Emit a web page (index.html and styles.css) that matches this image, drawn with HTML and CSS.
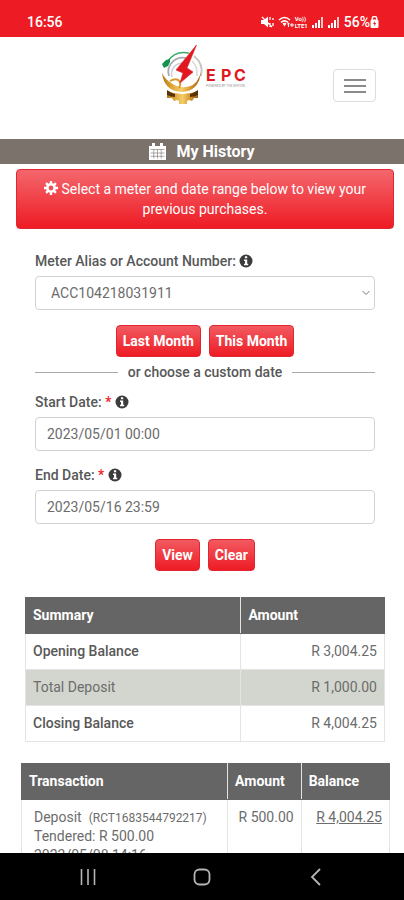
FILE: index.html
```html
<!DOCTYPE html>
<html lang="en">
<head>
<meta charset="utf-8">
<meta name="viewport" content="width=device-width, initial-scale=1">
<title>My History</title>
<link rel="stylesheet" href="styles.css">
</head>
<body>
<svg class="defs" aria-hidden="true">
  <symbol id="info" viewBox="0 0 14 14">
    <circle cx="7" cy="7" r="6.500" fill="#3c3c3c"/>
    <path d="M5.900 2.300h2.300v1.900H5.900zM5 5.400h3.200v4.400h1v1.500H5V9.800h1V6.900H5z" fill="#fff"/>
  </symbol>
  <symbol id="signal" viewBox="0 0 12 12">
    <path d="M0 9h2v3H0zM3 7h2v5H3zM6 4h2v8H6z" fill="#fff"/>
    <path d="M9 1h2v11H9z" fill="#fff" opacity=".75"/>
  </symbol>
</svg>

<div class="status-bar">
  <span class="clock">16:56</span>
  <div class="status-icons">
    <svg width="13" height="12" viewBox="0 0 13 12" aria-hidden="true"><path d="M0 4h3l4-3.500v11L3 8H0z" fill="#fff"/><path d="M1 1l10 10M9 1v3M9 7v4M12 2v2M12 7v3" stroke="#fff" stroke-width="1.300" fill="none"/></svg>
    <svg width="17" height="12" viewBox="0 0 17 12" aria-hidden="true"><path d="M1 4q5.500-5 11 0M3 6.300q3.500-3 7 0" stroke="#fff" stroke-width="1.600" fill="none"/><path d="M4.500 7.500q2-1.500 4 0l-2 3z" fill="#fff"/><path d="M10.500 11V7M9.200 8.300L10.500 7l1.300 1.300M14 7v4M12 9h4" stroke="#fff" fill="none"/></svg>
    <span class="volte"><span>Vo))</span><span>LTE1</span></span>
    <svg class="signal" width="12" height="12" aria-hidden="true"><use href="#signal"/></svg>
    <svg class="signal" width="12" height="12" aria-hidden="true"><use href="#signal"/></svg>
    <span class="battery">56%</span>
    <svg width="9" height="12" viewBox="0 0 9 12" aria-hidden="true"><path d="M2.200 4V2.500a2.300 2 0 0 1 4.600 0V4" stroke="#fff" stroke-width="1.300" fill="none"/><rect x=".5" y="3.500" width="8" height="8.500" rx="1.500" fill="#fff"/><path d="M5 4.800L3 8h1.500L4 10.800 6.300 7H4.700z" fill="#ed1c24"/></svg>
  </div>
</div>

<div class="page">
  <header class="site-header">
    <a class="brand" href="#" aria-label="EPC home">
      <svg width="86" height="62" viewBox="0 0 86 62" aria-hidden="true">
        <defs>
          <linearGradient id="gold" x1="0" x2="1">
            <stop offset="0" stop-color="#b3761a"/><stop offset=".25" stop-color="#dfa636"/>
            <stop offset=".5" stop-color="#f3cf6a"/><stop offset=".75" stop-color="#d4952a"/><stop offset="1" stop-color="#9a5f12"/>
          </linearGradient>
        </defs>
        <path d="M6 46q15 6 31 0v7h-4l-2 3-3-1-2 1v3h-8v-3l-2-1-3 1-2-3H6z" fill="url(#gold)"/>
        <path d="M6 45q4 3 8 4v3q-4 0-8-2zM37 45q-4 3-8 4v3q4 0 8-2z" fill="#5a3207"/>
        <path d="M8 31a14 14 0 0 1 19-17" fill="none" stroke="#a9a9b0" stroke-width="1.800"/>
        <path d="M11 32a11 11 0 0 1 12-14" fill="none" stroke="#cfcfd4" stroke-width="1.500"/>
        <path d="M33 11q10 8 7 20" stroke="#c9c5c1" stroke-width="1.800" fill="none"/>
        <path d="M31 16q6 5 5 15" stroke="#d9d6d6" stroke-width="1.500" fill="none"/>
        <path d="M6 17Q14 5 28 8" stroke="#3aa96b" stroke-width="1.500" fill="none"/>
        <path d="M1 19l4-4 4-1v3l-2 4-4 2z" fill="#11934b"/>
        <path d="M1 28q2 18 20 19 17-1 19-20-3 12-12 14.500-9 2.500-17-3-7-4-10-10.500z" fill="url(#gold)"/>
        <path d="M9 36q7-4 10 1 1 3-1 6" stroke="#d99a29" stroke-width="2" fill="none"/>
        <path d="M35.500 0L15 25l7 3-3 10 13-11-6-4z" fill="#e01820" stroke="#e01820" stroke-width=".6"/>
        <text class="wordmark" x="45 60 73" y="36">EPC</text>
        <text class="tagline" x="45" y="42">POWERED BY THE NATION</text>
      </svg>
    </a>
    <button class="menu-button" type="button" aria-label="Menu"><span></span><span></span><span></span></button>
  </header>

  <h1 class="page-title">
    <svg width="17" height="17" viewBox="0 0 17 17" aria-hidden="true"><path d="M0 3h17v14H0z" fill="#fff"/><path d="M3 0h3v4H3zM11 0h3v4h-3z" fill="#fff"/><path d="M1.500 6.500h14M1.500 10h14M1.500 13.300h14M4.800 6.500v9M8.500 6.500v9M12.200 6.500v9" stroke="#7b726b" stroke-width=".6"/></svg>
    My History
  </h1>

  <main class="content">
    <p class="notice">
      <svg width="14" height="14" viewBox="0 0 14 14" aria-hidden="true"><circle cx="7" cy="7" r="3.700" fill="none" stroke="#fff" stroke-width="2.600"/><path d="M7 0v2.500M7 11.500V14M0 7h2.500M11.500 7H14M2.100 2.100l1.700 1.700M10.200 10.200l1.700 1.700M2.100 11.900l1.700-1.700M10.200 3.800l1.700-1.700" stroke="#fff" stroke-width="2.400"/></svg>
      Select a meter and date range below to view your previous purchases.
    </p>

    <form class="filters">
      <div class="field">
        <label for="meter">Meter Alias or Account Number: <svg width="14" height="14" aria-hidden="true"><use href="#info"/></svg></label>
        <div class="select-wrap">
          <select id="meter"><option>ACC104218031911</option></select>
          <svg class="chevron" width="8" height="6" viewBox="0 0 8 6" aria-hidden="true"><path d="M.5 1L4 4.500 7.500 1" stroke="#777" fill="none"/></svg>
        </div>
      </div>
      <div class="buttons">
        <button class="btn" type="button">Last Month</button>
        <button class="btn" type="button">This Month</button>
      </div>
      <div class="divider">or choose a custom date</div>
      <div class="field">
        <label for="start">Start Date: <span class="required">*</span> <svg width="14" height="14" aria-hidden="true"><use href="#info"/></svg></label>
        <input id="start" type="text" value="2023/05/01 00:00">
      </div>
      <div class="field">
        <label for="end">End Date: <span class="required">*</span> <svg width="14" height="14" aria-hidden="true"><use href="#info"/></svg></label>
        <input id="end" type="text" value="2023/05/16 23:59">
      </div>
      <div class="buttons">
        <button class="btn" type="button">View</button>
        <button class="btn" type="reset">Clear</button>
      </div>
    </form>

    <table class="summary">
      <thead><tr><th class="summary-name">Summary</th><th>Amount</th></tr></thead>
      <tbody>
        <tr><td class="strong">Opening Balance</td><td class="money">R 3,004.25</td></tr>
        <tr class="shaded"><td>Total Deposit</td><td class="money">R 1,000.00</td></tr>
        <tr><td class="strong">Closing Balance</td><td class="money">R 4,004.25</td></tr>
      </tbody>
    </table>

    <table class="transactions">
      <thead><tr><th class="tx-name">Transaction</th><th class="tx-amount">Amount</th><th>Balance</th></tr></thead>
      <tbody>
        <tr>
          <td>Deposit &nbsp;<span class="receipt">(RCT1683544792217)</span><br>Tendered: R 500.00<br>2023/05/08 14:16</td>
          <td class="money">R 500.00</td>
          <td class="money"><a href="#">R 4,004.25</a></td>
        </tr>
      </tbody>
    </table>
  </main>
</div>

<nav class="system-nav" aria-label="System">
  <button type="button" aria-label="Recent apps"><svg width="16" height="16" viewBox="0 0 16 16"><path d="M1.500 0v16M8 0v16M14.500 0v16" stroke="#b5b5b5" stroke-width="1.600"/></svg></button>
  <button type="button" aria-label="Home"><svg width="18" height="18" viewBox="0 0 18 18"><rect x="1.500" y="1.500" width="15" height="15" rx="5" fill="none" stroke="#b5b5b5" stroke-width="1.800"/></svg></button>
  <button type="button" aria-label="Back"><svg width="16" height="18" viewBox="0 0 16 18"><path d="M12 1L4 9l8 8" fill="none" stroke="#b5b5b5" stroke-width="1.800"/></svg></button>
</nav>
</body>
</html>
```
FILE: styles.css
```css
* { box-sizing: border-box; }

body {
  margin: 0;
  height: 100vh;
  display: flex;
  flex-direction: column;
  overflow: hidden;
  background: #fff;
  color: #6c6c6c;
  font: 14px/20px Roboto, "Liberation Sans", sans-serif;
}

button, input, select { font: inherit; }
svg { flex: none; }
.defs { position: absolute; width: 0; height: 0; }

.status-bar {
  flex: none;
  display: flex;
  justify-content: space-between;
  align-items: center;
  padding: 12px 25px 5px 27px;
  background: #ed1c24;
  color: #fff;
}
.clock { font-weight: 500; }
.status-icons { display: flex; align-items: center; gap: 4px; }
.volte { display: flex; flex-direction: column; font-size: 6px; line-height: 7px; font-weight: 700; margin-left: -4px; }
.battery { font-weight: 500; margin-right: -4px; }

.page { flex: 1; min-height: 0; overflow: hidden; }

.site-header {
  display: grid;
  grid-template-columns: 1fr auto 1fr;
  align-items: start;
  height: 102px;
  padding: 8px 28px 0;
}
.brand { grid-column: 2; display: block; margin-left: 4px; }
.brand svg { display: block; }
.wordmark { font: 700 16px Inter, sans-serif; fill: #e01820; }
.tagline { font: 3px Inter, sans-serif; fill: #888; }
.menu-button {
  justify-self: end;
  display: flex;
  flex-direction: column;
  justify-content: center;
  align-items: center;
  gap: 4px;
  width: 43px;
  height: 33px;
  margin-top: 24px;
  padding: 0;
  border: 1px solid #ddd;
  border-radius: 4px;
  background: #fff;
}
.menu-button span { width: 22px; height: 2px; background: #8a8a8a; }

.page-title {
  display: flex;
  justify-content: center;
  align-items: center;
  gap: 10px;
  margin: 0;
  height: 25px;
  background: #7b726b;
  color: #fff;
  font-size: 16px;
  font-weight: 700;
}

.content { padding: 5px 10px 0 16px; }

.notice {
  margin: 0;
  padding: 9px 20px;
  border: 1px solid #e02630;
  border-radius: 4px;
  background: linear-gradient(#f4676d, #ee1b24);
  color: #fff;
  text-align: center;
}
.notice svg { vertical-align: -1px; }

.filters { padding: 22px 19px 0; }
.field { margin-bottom: 14px; }
.field label { display: block; margin-bottom: 5px; color: #585858; font-weight: 500; }
.field label svg { vertical-align: -2px; }
.required { color: #ed1c24; }
.field input, .field select {
  display: block;
  width: 100%;
  height: 34px;
  padding: 0 11px;
  border: 1px solid #d2d2d2;
  border-radius: 4px;
  background: #fff;
  color: #6c6c6c;
}
.field select { appearance: none; padding: 0 15px; }
.select-wrap { position: relative; }
.chevron { position: absolute; right: 5px; top: 14px; pointer-events: none; }

.buttons { display: flex; justify-content: center; gap: 8px; padding-top: 1px; }
.btn {
  height: 32px;
  padding: 0 6px;
  border: 1px solid #e02630;
  border-radius: 4px;
  background: linear-gradient(#f25a61, #ee1b24);
  color: #fff;
  font-weight: 700;
}

.divider {
  display: flex;
  align-items: center;
  gap: 10px;
  margin: 5px 0 10px;
  color: #585858;
  font-weight: 500;
}
.divider::before, .divider::after { content: ""; flex: 1; height: 1px; background: #aaa; }

table { border-collapse: collapse; table-layout: fixed; }
th, td { border: 1px solid #e4e4e4; padding: 8px 7px; font-weight: 400; text-align: left; vertical-align: top; line-height: 19px; }
th { background: #656565; color: #fff; font-weight: 700; border-top-color: #656565; border-bottom-color: #656565; }
th:first-child { border-left-color: #656565; }
th:last-child { border-right-color: #656565; }
.money { text-align: right; }
.strong { color: #585858; font-weight: 500; }
.shaded { background: #d3d6ce; }

.summary { width: calc(100% - 18px); margin: 26px 0 0 9px; }
.summary-name { width: 60%; }

.transactions { width: calc(100% - 9px); margin: 21px 0 0 5px; }
.tx-name { width: 56%; }
.tx-amount { width: 20%; }
.transactions td:first-child { padding-left: 12px; }
.transactions a { color: inherit; }
.receipt { font-size: 12px; line-height: 12px; }

.system-nav {
  flex: none;
  display: flex;
  justify-content: space-between;
  align-items: center;
  height: 47px;
  padding: 0 80px;
  background: #000;
}
.system-nav button { display: flex; padding: 0; border: 0; background: none; }
```
